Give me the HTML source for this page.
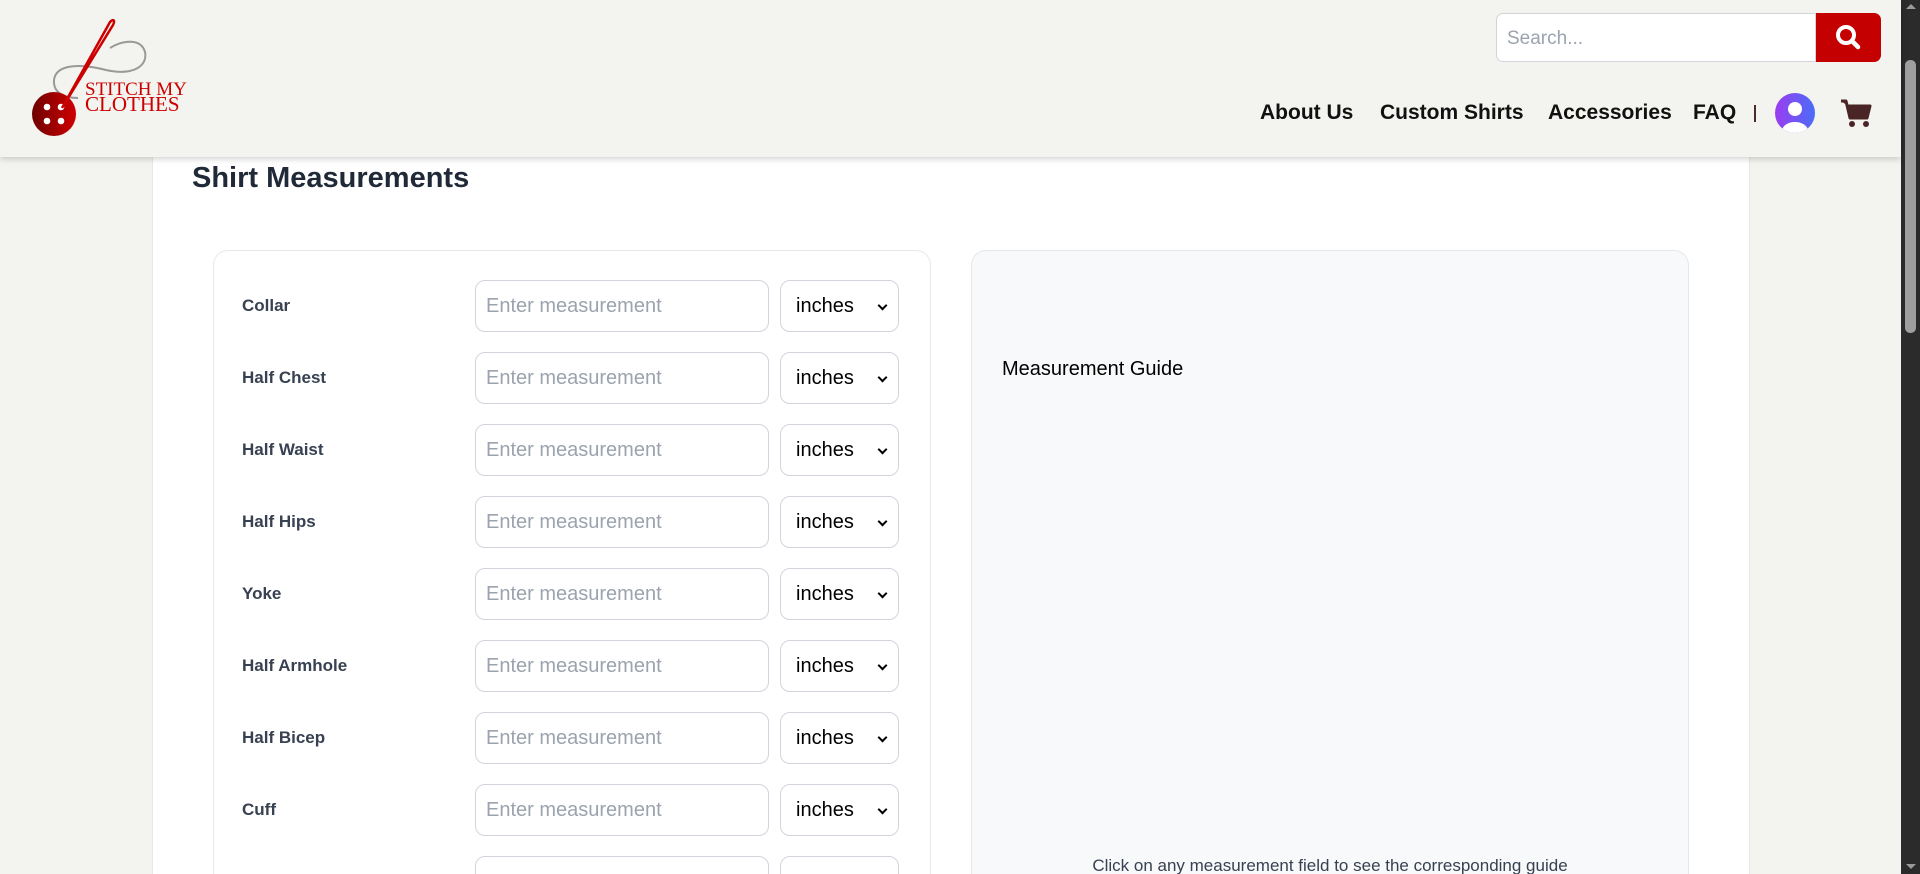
<!DOCTYPE html>
<html style="overflow:hidden"><head><meta charset="utf-8"><style>
*{box-sizing:border-box;margin:0;padding:0}
html,body{width:1920px;height:874px;overflow:hidden}
body{background:#f3f3ef;font-family:"Liberation Sans",Arial,sans-serif}
#w{position:relative;width:1920px;height:874px;overflow:hidden}
.header{position:absolute;left:0;top:0;width:1901px;height:157px;background:#f3f3ef;box-shadow:0 2px 6px rgba(0,0,0,.18);z-index:2}
.main{position:absolute;left:152px;top:150px;width:1598px;height:724px;background:#fff;border-left:1px solid #e8e8e4;border-right:1px solid #e8e8e4}
h1{position:absolute;left:192px;top:162px;font-size:29px;font-weight:bold;color:#1f2937;z-index:3}
.card{position:absolute;top:250px;height:640px;border:1px solid #e5e7eb;border-radius:15px}
.lbl{position:absolute;left:242px;font-size:17px;font-weight:bold;color:#374151}
.inp{position:absolute;left:475px;width:294px;height:52px;border:1px solid #d1d5db;border-radius:10px;background:#fff;font-size:20px;color:#9ca3af;padding:14px 10px}
.sel{position:absolute;left:780px;width:119px;height:52px;border:1px solid #d1d5db;border-radius:10px;background:#fff;font-size:20px;color:#000;padding:14px 15px}
.sel:after{content:"";position:absolute;right:12px;top:21px;width:5px;height:5px;border-right:2px solid #000;border-bottom:2px solid #000;transform:rotate(45deg)}
.nav{position:absolute;top:101px;font-size:21px;font-weight:bold;color:#111}
.sb{position:absolute;left:1901px;top:0;width:19px;height:874px;background:#2b2b2b}
</style></head><body><div id="w">
<div class="header">
<svg style="position:absolute;left:28px;top:18px" width="160" height="120" viewBox="0 0 160 120">
<defs><linearGradient id="g" x1="0" x2="1"><stop offset="0" stop-color="#6e0000"/><stop offset="1" stop-color="#d00000"/></linearGradient></defs>
<path d="M50 80 C38 80 25 76 26 62 C28 45 55 46 78 52 C105 58 120 48 117 34 C113 20 95 22 82 30" fill="none" stroke="#999" stroke-width="2"/>
<circle cx="26" cy="96" r="22" fill="url(#g)"/>
<circle cx="19" cy="89" r="3.3" fill="#fff"/><circle cx="33" cy="89" r="3.3" fill="#fff"/>
<circle cx="19" cy="103" r="3.3" fill="#fff"/><circle cx="33" cy="103" r="3.3" fill="#fff"/>
<path d="M34 90 L82 4 C86 0 87 3 85 7 Z" fill="none" stroke="#c00" stroke-width="2.5"/>
<text x="57" y="77" font-family="Liberation Serif,serif" font-size="19" fill="#c00">STITCH MY</text>
<text x="57" y="93" font-family="Liberation Serif,serif" font-size="21" fill="#c00">CLOTHES</text>
</svg>
<div style="position:absolute;left:1496px;top:13px;width:320px;height:49px;background:#fff;border:1px solid #d1d5db;border-radius:7px 0 0 7px;font-size:19px;color:#9ca3af;padding:14px 10px">Search...</div>
<div style="position:absolute;left:1816px;top:13px;width:65px;height:49px;background:#c40000;border-radius:0 7px 7px 0">
<svg width="65" height="49" viewBox="0 0 65 49"><circle cx="30" cy="22" r="8" fill="none" stroke="#fff" stroke-width="4"/><path d="M36 28 L42 34" stroke="#fff" stroke-width="4.5" stroke-linecap="round"/></svg></div>
<div class="nav" style="left:1260px">About Us</div>
<div class="nav" style="left:1380px">Custom Shirts</div>
<div class="nav" style="left:1548px">Accessories</div>
<div class="nav" style="left:1693px">FAQ</div>
<div style="position:absolute;left:1754px;top:105px;width:2px;height:17px;background:#4a2a2a"></div>
<svg style="position:absolute;left:1775px;top:93px" width="40" height="40" viewBox="0 0 40 40"><defs><linearGradient id="a" x1="0" x2="1"><stop offset="0" stop-color="#9b3df0"/><stop offset="1" stop-color="#4a6cf7"/></linearGradient><clipPath id="c"><circle cx="20" cy="20" r="20"/></clipPath></defs><circle cx="20" cy="20" r="20" fill="url(#a)"/><circle cx="20" cy="16" r="7" fill="#fff"/><ellipse cx="20" cy="38" rx="13" ry="9" fill="#fff" clip-path="url(#c)"/></svg>
<svg style="position:absolute;left:1840px;top:98px" width="32" height="30" viewBox="0 0 32 30"><path d="M1 3 H6 L10 20 H27 L30 8 H8" fill="#4a2525" stroke="#4a2525" stroke-width="3" stroke-linejoin="round"/><circle cx="12" cy="26" r="3" fill="#4a2525"/><circle cx="26" cy="26" r="3" fill="#4a2525"/></svg>
</div>
<div class="main"></div>
<h1>Shirt Measurements</h1>
<div class="card" style="left:213px;width:718px;background:#fff"></div>
<div class="card" style="left:971px;width:718px;background:#f8f9fa"></div>
<div style="position:absolute;left:1002px;top:358px;font-size:20px;color:#000">Measurement Guide</div>
<div style="position:absolute;left:971px;width:718px;top:856px;text-align:center;font-size:17px;color:#374151">Click on any measurement field to see the corresponding guide</div>

<div class="lbl" style="top:296px">Collar</div><div class="inp" style="top:280px">Enter measurement</div><div class="sel" style="top:280px">inches</div>
<div class="lbl" style="top:368px">Half Chest</div><div class="inp" style="top:352px">Enter measurement</div><div class="sel" style="top:352px">inches</div>
<div class="lbl" style="top:440px">Half Waist</div><div class="inp" style="top:424px">Enter measurement</div><div class="sel" style="top:424px">inches</div>
<div class="lbl" style="top:512px">Half Hips</div><div class="inp" style="top:496px">Enter measurement</div><div class="sel" style="top:496px">inches</div>
<div class="lbl" style="top:584px">Yoke</div><div class="inp" style="top:568px">Enter measurement</div><div class="sel" style="top:568px">inches</div>
<div class="lbl" style="top:656px">Half Armhole</div><div class="inp" style="top:640px">Enter measurement</div><div class="sel" style="top:640px">inches</div>
<div class="lbl" style="top:728px">Half Bicep</div><div class="inp" style="top:712px">Enter measurement</div><div class="sel" style="top:712px">inches</div>
<div class="lbl" style="top:800px">Cuff</div><div class="inp" style="top:784px">Enter measurement</div><div class="sel" style="top:784px">inches</div>
<div class="inp" style="top:856px"></div><div class="sel" style="top:856px"></div>

<div class="sb">
<div style="position:absolute;left:5px;top:4px;width:0;height:0;border-left:5px solid transparent;border-right:5px solid transparent;border-bottom:5px solid #9a9a9a"></div>
<div style="position:absolute;left:4px;top:60px;width:11px;height:273px;background:#9f9f9f;border-radius:5px"></div>
<div style="position:absolute;left:5px;top:864px;width:0;height:0;border-left:5px solid transparent;border-right:5px solid transparent;border-top:5px solid #9a9a9a"></div>
</div>
</div></body></html>
